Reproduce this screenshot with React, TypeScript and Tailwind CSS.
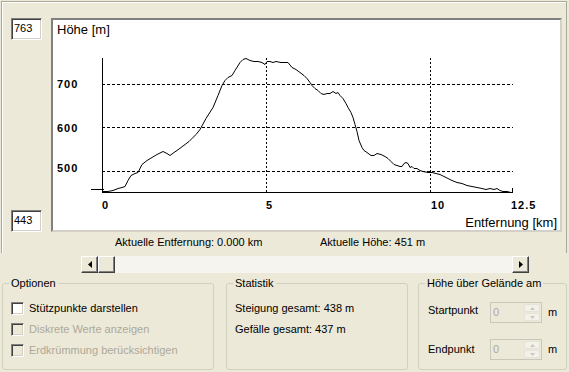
import { ReactNode } from 'react';

const profile: [number, number][] = [
  [102, 191], [108, 191], [113, 190], [118, 188], [122, 187], [125, 186], [128, 180], [131, 175], [135, 173], [138, 172],
  [142, 164], [147, 160], [152, 157], [157, 154], [163, 151], [167, 153], [170, 155], [174, 152], [177, 150], [181, 147],
  [185, 144], [189, 141], [192, 138], [196, 134], [200, 129], [206, 118], [213, 107], [218, 95], [222, 85], [225, 80],
  [228, 77], [232, 75], [235, 70], [240, 62], [243, 59], [246, 58], [250, 60], [254, 61], [258, 61], [262, 62],
  [265, 64], [267, 61], [270, 61], [273, 62], [276, 61], [281, 62], [288, 62], [292, 67], [296, 69], [300, 72],
  [304, 75], [307, 78], [310, 82], [312, 85], [315, 88], [318, 90], [321, 93], [324, 94], [327, 93], [330, 93],
  [333, 91], [336, 93], [338, 92], [340, 95], [343, 98], [346, 103], [348, 107], [351, 112], [353, 117], [355, 124],
  [357, 131], [359, 140], [362, 147], [364, 150], [367, 152], [371, 155], [374, 155], [377, 153], [381, 154], [385, 156],
  [388, 158], [391, 161], [394, 164], [397, 165], [400, 166], [402, 166], [404, 163], [406, 162], [408, 163], [410, 167],
  [412, 166], [414, 168], [417, 168], [420, 170], [423, 171], [428, 172], [432, 172], [436, 173], [440, 174], [444, 176],
  [448, 178], [452, 180], [457, 182], [462, 183], [467, 185], [472, 186], [477, 187], [482, 188], [486, 189], [490, 188],
  [494, 189], [497, 188], [500, 190], [503, 191], [507, 191], [511, 192],
];

function Sunken({ className, children }: { className: string; children?: ReactNode }) {
  return (
    <div
      className={
        'border border-t-[#808080] border-l-[#808080] border-r-white border-b-white shadow-[inset_1px_1px_0_#404040,inset_-1px_-1px_0_#D4D0C8] ' +
        className
      }
    >
      {children}
    </div>
  );
}

function Checkbox({ label, disabled }: { label: string; disabled?: boolean }) {
  return (
    <div className="flex items-center h-[13px] gap-[5px]">
      <Sunken className={'w-[13px] h-[13px] ' + (disabled ? 'bg-[#ECE9D8]' : 'bg-white')} />
      <span className={disabled ? 'text-[#ACA899]' : 'text-black'}>{label}</span>
    </div>
  );
}

function GroupBox({ title, className, children }: { title: string; className: string; children?: ReactNode }) {
  return (
    <div className={'relative border border-[#D0D0BF] rounded-[3px] ' + className}>
      <span className="absolute -top-[7px] left-[6px] px-[2px] bg-[#ECE9D8] leading-[13px]">{title}</span>
      {children}
    </div>
  );
}

function Spinner() {
  return (
    <div className="flex w-[52px] h-[21px] border border-[#C9C7BA] bg-[#ECE9D8]">
      <div className="flex-1 pl-[2px] pt-[3px] text-[#ACA899] leading-[13px]">0</div>
      <div className="w-[17px] flex flex-col gap-[1px] py-[1px] pr-[1px]">
        <div className="flex-1 rounded-[2px] border border-[#E5E3D8] bg-[#F2F1EA] flex items-center justify-center">
          <svg width="5" height="3" viewBox="0 0 5 3">
            <path d="M0 3 L2.5 0 L5 3 Z" fill="#C9C7BA" />
          </svg>
        </div>
        <div className="flex-1 rounded-[2px] border border-[#E5E3D8] bg-[#F2F1EA] flex items-center justify-center">
          <svg width="5" height="3" viewBox="0 0 5 3">
            <path d="M0 0 L2.5 3 L5 0 Z" fill="#C9C7BA" />
          </svg>
        </div>
      </div>
    </div>
  );
}

function ScrollButton({ dir }: { dir: 'left' | 'right' | 'none' }) {
  return (
    <div className="w-[17px] h-[17px] bg-[#ECE9D8] border border-t-white border-l-white border-r-[#404040] border-b-[#404040] shadow-[inset_-1px_-1px_0_#808080] flex items-center justify-center">
      {dir === 'left' && (
        <svg width="4" height="7" viewBox="0 0 4 7">
          <path d="M4 0 L0 3.5 L4 7 Z" fill="#000" />
        </svg>
      )}
      {dir === 'right' && (
        <svg width="4" height="7" viewBox="0 0 4 7">
          <path d="M0 0 L4 3.5 L0 7 Z" fill="#000" />
        </svg>
      )}
    </div>
  );
}

function ProfileChart() {
  const pts = profile.map(([x, y]) => `${x},${y + 0.5}`).join(' ');
  const axisLabel = 'font-bold text-[11px]';
  return (
    <svg width="507" height="210" viewBox="53 20 507 210" className="block">
      <text x="57" y="34" fontSize="13" fontFamily="Liberation Sans, Arial, sans-serif" fill="#000">
        Höhe [m]
      </text>
      <g stroke="#000" strokeWidth="1" shapeRendering="crispEdges" fill="none">
        <line x1="102" y1="84.5" x2="513" y2="84.5" strokeDasharray="3 2" />
        <line x1="102" y1="127.5" x2="513" y2="127.5" strokeDasharray="3 2" />
        <line x1="102" y1="171.5" x2="513" y2="171.5" strokeDasharray="3 2" />
        <line x1="266.5" y1="58" x2="266.5" y2="192" strokeDasharray="2 2" />
        <line x1="430.5" y1="58" x2="430.5" y2="192" strokeDasharray="2 2" />
        <line x1="102.5" y1="58" x2="102.5" y2="193" />
        <line x1="102" y1="192.5" x2="513" y2="192.5" />
        <line x1="91" y1="189.5" x2="104" y2="189.5" />
        <line x1="512.5" y1="188" x2="512.5" y2="193" />
      </g>
      <polyline points={pts} fill="none" stroke="#000" strokeWidth="1" />
      <g fontFamily="Liberation Sans, Arial, sans-serif" fill="#000" className={axisLabel} letterSpacing="1">
        <text x="57" y="88">700</text>
        <text x="57" y="132">600</text>
        <text x="57" y="172">500</text>
        <text x="102" y="209">0</text>
        <text x="266" y="209">5</text>
        <text x="431" y="209">10</text>
        <text x="511" y="209">12.5</text>
      </g>
      <text x="557" y="227" textAnchor="end" fontSize="13" fontFamily="Liberation Sans, Arial, sans-serif" fill="#000">
        Entfernung [km]
      </text>
    </svg>
  );
}

export default function App() {
  return (
    <div className="w-[569px] h-[372px] bg-[#ECE9D8] font-['Liberation_Sans',Arial,sans-serif] text-[11px] text-black leading-[13px] overflow-hidden">
      {/* Profile frame */}
      <div className="ml-[1px] mt-[1px] w-[566px] h-[252px] border border-[#ACA899] border-b-0 shadow-[inset_1px_1px_0_#fff]">
        <div className="flex mt-[16px]">
          <div className="w-[49px] h-[214px] flex flex-col justify-between pl-[9px]">
            <Sunken className="w-[31px] h-[22px] bg-white pl-[2px] pt-[3px]">763</Sunken>
            <Sunken className="w-[31px] h-[22px] bg-white pl-[2px] pt-[3px]">443</Sunken>
          </div>
          <div className="w-[511px] h-[214px] bg-white border-2 border-t-[#808080] border-l-[#808080] border-r-[#D4D0C8] border-b-[#D4D0C8]">
            <ProfileChart />
          </div>
        </div>
        <div className="flex mt-[4px] h-[13px]">
          <span className="ml-[113px] w-[205px]">Aktuelle Entfernung: 0.000 km</span>
          <span>Aktuelle Höhe: 451 m</span>
        </div>
      </div>

      {/* Scrollbar */}
      <div className="ml-[81px] mt-[3px] w-[448px] h-[17px] flex">
        <ScrollButton dir="left" />
        <ScrollButton dir="none" />
        <div className="flex-1 bg-[#F5F4EF]" />
        <ScrollButton dir="right" />
      </div>

      {/* Groups */}
      <div className="flex mt-[10px] ml-[2px] h-[87px]">
        <GroupBox title="Optionen" className="w-[212px] h-[87px] pt-[18px] pl-[8px]">
          <div className="flex flex-col gap-[8px]">
            <Checkbox label="Stützpunkte darstellen" />
            <Checkbox label="Diskrete Werte anzeigen" disabled />
            <Checkbox label="Erdkrümmung berücksichtigen" disabled />
          </div>
        </GroupBox>
        <GroupBox title="Statistik" className="ml-[12px] w-[182px] h-[87px] pt-[18px] pl-[8px]">
          <div className="flex flex-col gap-[8px]">
            <span>Steigung gesamt: 438 m</span>
            <span>Gefälle gesamt: 437 m</span>
          </div>
        </GroupBox>
        <GroupBox title="Höhe über Gelände am" className="ml-[10px] w-[149px] h-[87px] pt-[18px] pl-[9px]">
          <div className="flex flex-col gap-[16px]">
            <div className="flex items-center">
              <span className="w-[62px] -mt-[4px]">Startpunkt</span>
              <Spinner />
              <span className="ml-[6px]">m</span>
            </div>
            <div className="flex items-center">
              <span className="w-[62px]">Endpunkt</span>
              <Spinner />
              <span className="ml-[6px]">m</span>
            </div>
          </div>
        </GroupBox>
      </div>
    </div>
  );
}
